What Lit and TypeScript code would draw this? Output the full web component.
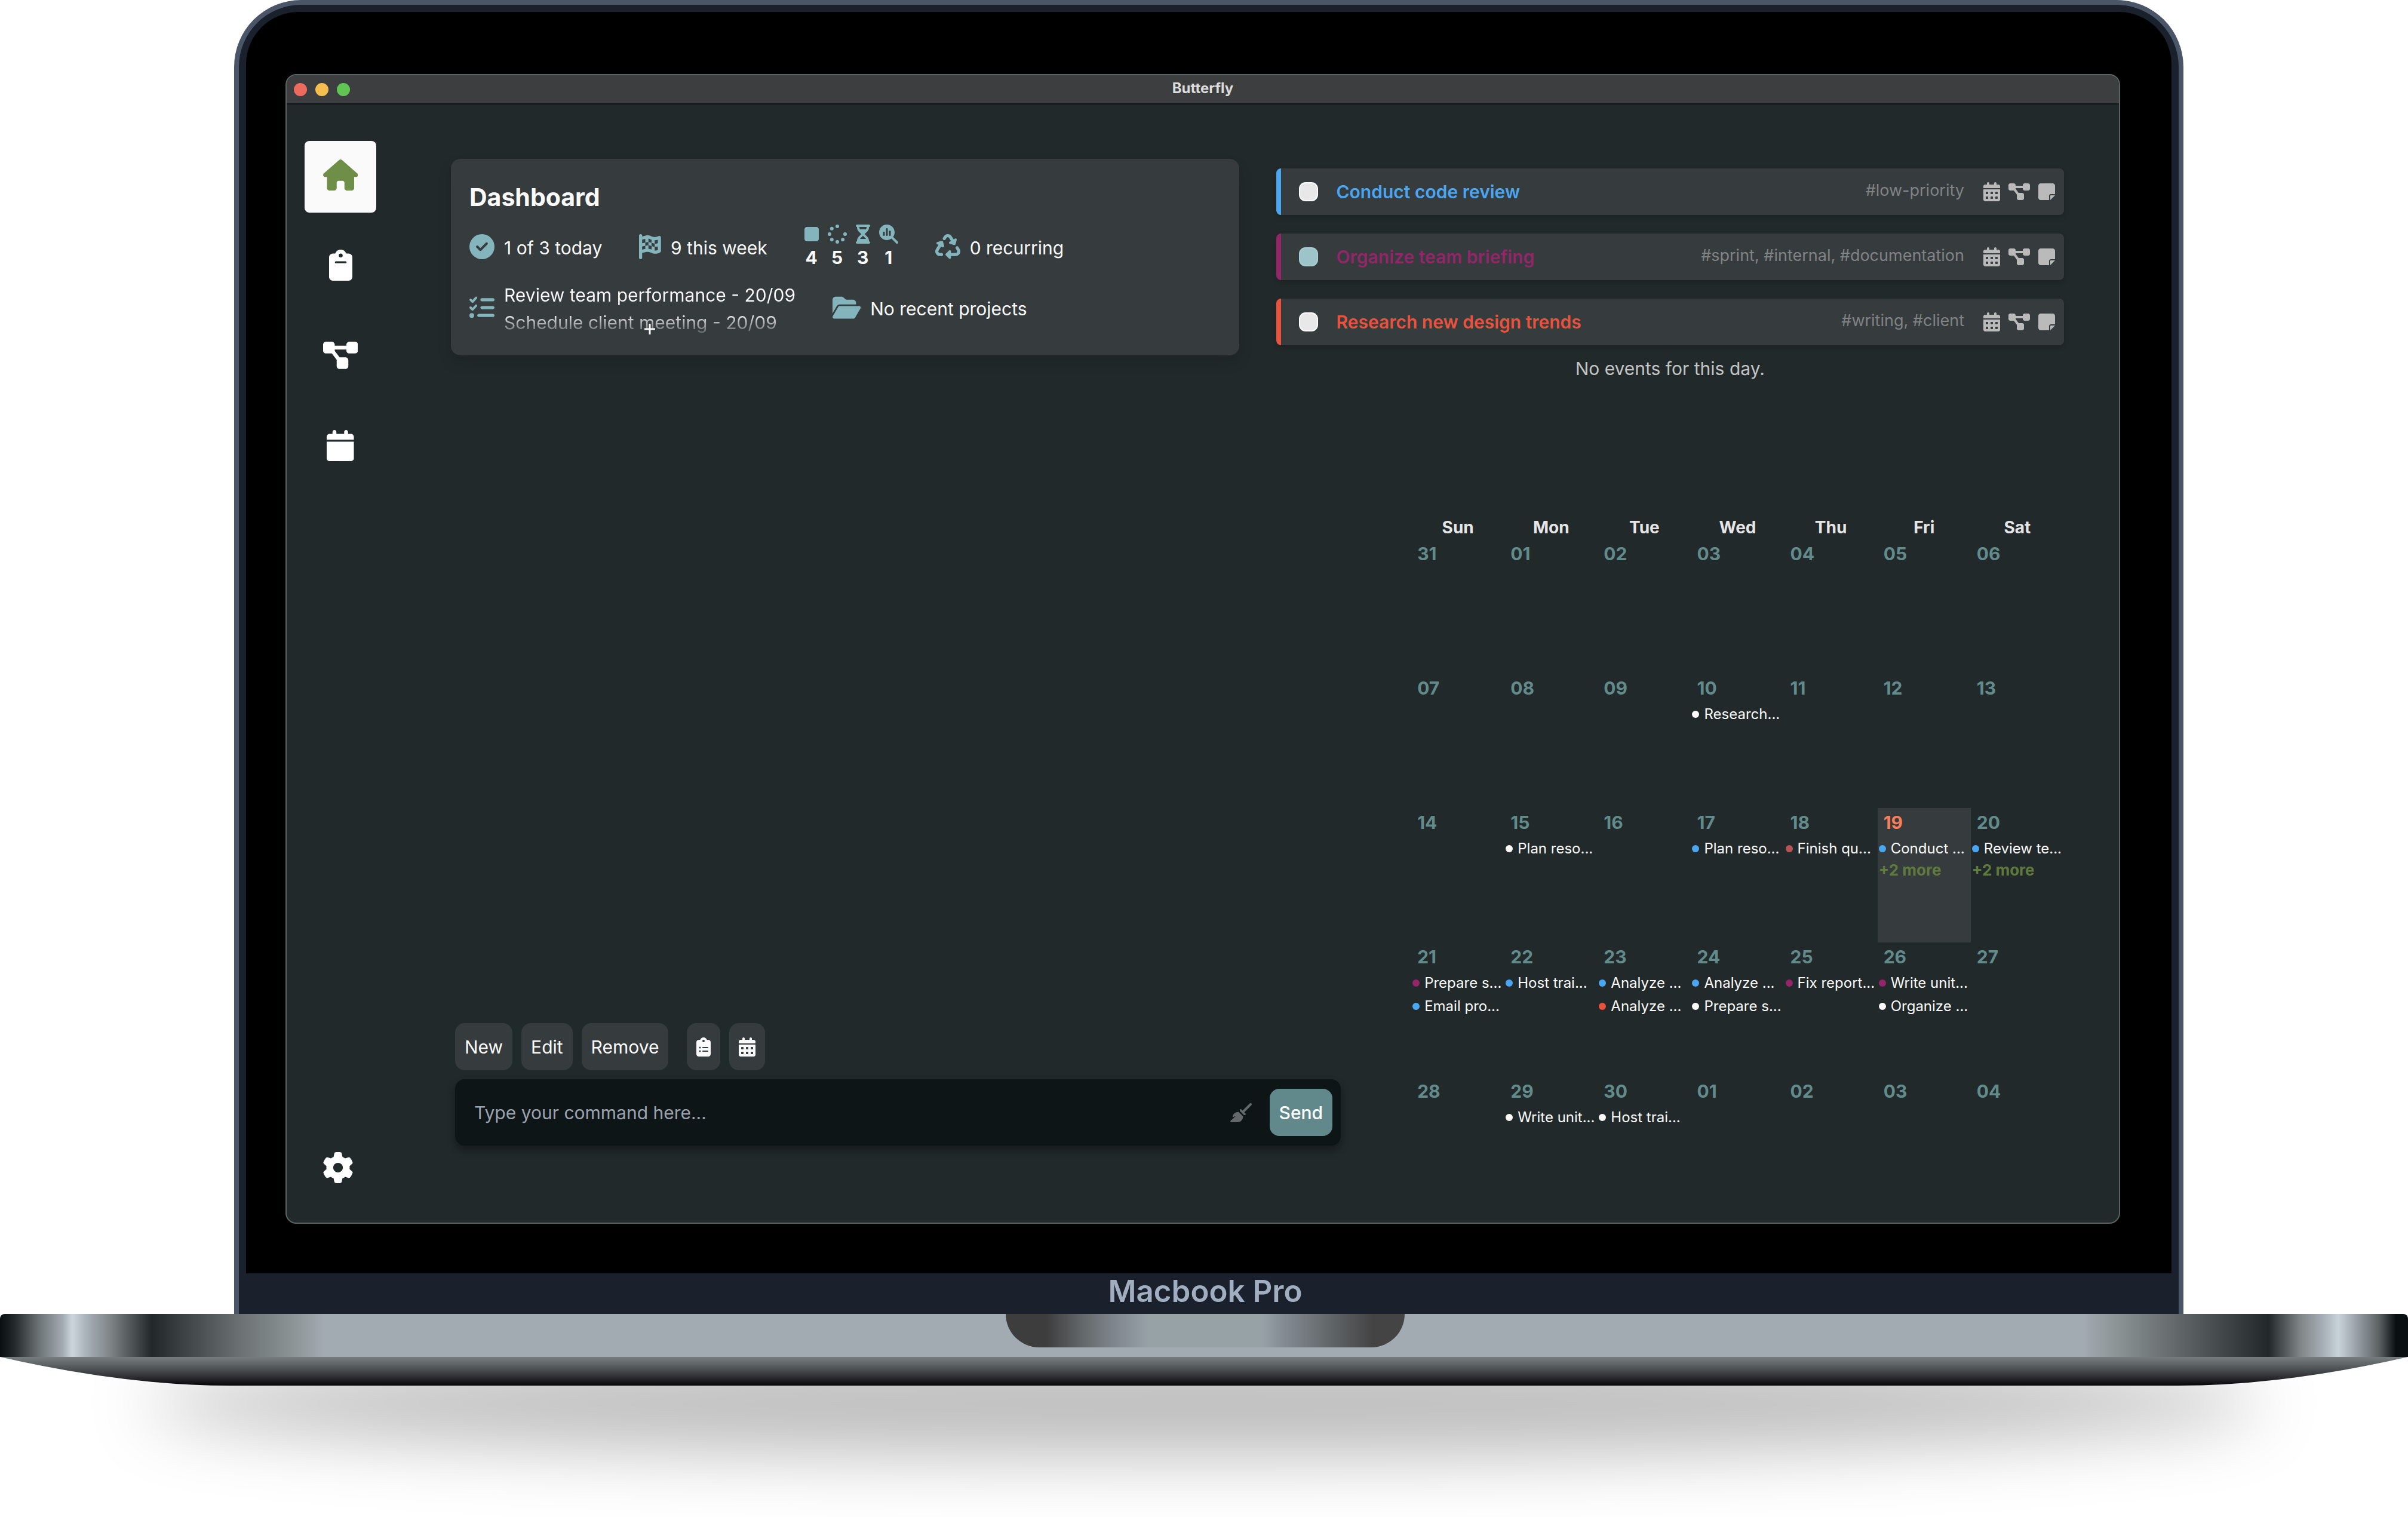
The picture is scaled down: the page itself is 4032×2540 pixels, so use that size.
import { LitElement, html, css, svg } from "lit";
import { customElement, property } from "lit/decorators.js";
import { classMap } from "lit/directives/class-map.js";

type Glyph = { w: number; d: string };

const CLIPBOARD_BODY =
  "M192 0c-41.8 0-77.4 26.7-90.5 64H64C28.7 64 0 92.7 0 128V448c0 35.3 28.7 64 64 64H320c35.3 0 64-28.7 64-64V128c0-35.3-28.7-64-64-64H282.5C269.4 26.7 233.8 0 192 0zm0 64a32 32 0 1 1 0 64 32 32 0 1 1 0-64z";

const ICONS: Record<string, Glyph> = {
  house: {
    w: 576,
    d: "M575.8 255.5c0 18-15 32.1-32 32.1h-32l.7 160.2c0 2.7-.2 5.4-.5 8.1V472c0 22.1-17.9 40-40 40H456c-1.1 0-2.2 0-3.3-.1c-1.4 .1-2.8 .1-4.2 .1H416 392c-22.1 0-40-17.9-40-40V448 384c0-17.7-14.3-32-32-32H256c-17.7 0-32 14.3-32 32v64 24c0 22.1-17.9 40-40 40H160 128.1c-1.5 0-3-.1-4.5-.2c-1.2 .1-2.4 .2-3.6 .2H104c-22.1 0-40-17.9-40-40V360c0-.9 0-1.9 .1-2.8V287.6H32c-18 0-32-14-32-32.1c0-9 3-17 10-24L266.4 8c7-7 15-8 22-8s15 2 21 7L564.8 231.5c8 7 12 15 11 24z",
  },
  clipboard: {
    w: 384,
    d: CLIPBOARD_BODY + "M112 192H272c8.8 0 16 7.2 16 16s-7.2 16-16 16H112c-8.8 0-16-7.2-16-16s7.2-16 16-16z",
  },
  clipboardList: {
    w: 384,
    d:
      CLIPBOARD_BODY +
      "M72 272a24 24 0 1 1 48 0 24 24 0 1 1 -48 0zm104-16H304c8.8 0 16 7.2 16 16s-7.2 16-16 16H176c-8.8 0-16-7.2-16-16s7.2-16 16-16zM72 368a24 24 0 1 1 48 0 24 24 0 1 1 -48 0zm88 0c0-8.8 7.2-16 16-16H304c8.8 0 16 7.2 16 16s-7.2 16-16 16H176c-8.8 0-16-7.2-16-16z",
  },
  diagram: {
    w: 576,
    d: "M0 80C0 53.5 21.5 32 48 32h96c26.5 0 48 21.5 48 48V96H384V80c0-26.5 21.5-48 48-48h96c26.5 0 48 21.5 48 48v96c0 26.5-21.5 48-48 48H432c-26.5 0-48-21.5-48-48V160H192v16c0 1.7-.1 3.4-.3 5L272 288h96c26.5 0 48 21.5 48 48v96c0 26.5-21.5 48-48 48H272c-26.5 0-48-21.5-48-48V336c0-1.7 .1-3.4 .3-5L144 224H48c-26.5 0-48-21.5-48-48V80z",
  },
  calendar: {
    w: 448,
    d: "M96 32V64H48C21.5 64 0 85.5 0 112v48H448V112c0-26.5-21.5-48-48-48H352V32c0-17.7-14.3-32-32-32s-32 14.3-32 32V64H160V32c0-17.7-14.3-32-32-32S96 14.3 96 32zM448 192H0V464c0 26.5 21.5 48 48 48H400c26.5 0 48-21.5 48-48V192z",
  },
  calendarDays: {
    w: 448,
    d: "M128 0c17.7 0 32 14.3 32 32V64H288V32c0-17.7 14.3-32 32-32s32 14.3 32 32V64h48c26.5 0 48 21.5 48 48v48H0V112C0 85.5 21.5 64 48 64H96V32c0-17.7 14.3-32 32-32zM0 192H448V464c0 26.5-21.5 48-48 48H48c-26.5 0-48-21.5-48-48V192zm64 80v32c0 8.8 7.2 16 16 16h32c8.8 0 16-7.2 16-16V272c0-8.8-7.2-16-16-16H80c-8.8 0-16 7.2-16 16zm128 0v32c0 8.8 7.2 16 16 16h32c8.8 0 16-7.2 16-16V272c0-8.8-7.2-16-16-16H208c-8.8 0-16 7.2-16 16zm144-16c-8.8 0-16 7.2-16 16v32c0 8.8 7.2 16 16 16h32c8.8 0 16-7.2 16-16V272c0-8.8-7.2-16-16-16H336zM64 400v32c0 8.8 7.2 16 16 16h32c8.8 0 16-7.2 16-16V400c0-8.8-7.2-16-16-16H80c-8.8 0-16 7.2-16 16zm144-16c-8.8 0-16 7.2-16 16v32c0 8.8 7.2 16 16 16h32c8.8 0 16-7.2 16-16V400c0-8.8-7.2-16-16-16H208zm112 16v32c0 8.8 7.2 16 16 16h32c8.8 0 16-7.2 16-16V400c0-8.8-7.2-16-16-16H336c-8.8 0-16 7.2-16 16z",
  },
  gear: {
    w: 512,
    d: "M495.9 166.6c3.2 8.7 .5 18.4-6.4 24.6l-43.3 39.4c1.1 8.3 1.7 16.8 1.7 25.4s-.6 17.1-1.7 25.4l43.3 39.4c6.9 6.2 9.6 15.9 6.4 24.6c-4.4 11.9-9.7 23.3-15.8 34.3l-4.7 8.1c-6.6 11-14 21.4-22.1 31.2c-5.9 7.2-15.7 9.6-24.5 6.8l-55.7-17.7c-13.4 10.3-28.2 18.9-44 25.4l-12.5 57.1c-2 9.1-9 16.3-18.2 17.8c-13.8 2.3-28 3.5-42.5 3.5s-28.7-1.2-42.5-3.5c-9.2-1.5-16.2-8.7-18.2-17.8l-12.5-57.1c-15.8-6.5-30.6-15.1-44-25.4L83.1 425.9c-8.8 2.8-18.6 .3-24.5-6.8c-8.1-9.8-15.5-20.2-22.1-31.2l-4.7-8.1c-6.1-11-11.4-22.4-15.8-34.3c-3.2-8.7-.5-18.4 6.4-24.6l43.3-39.4C64.6 273.1 64 264.6 64 256s.6-17.1 1.7-25.4L22.4 191.2c-6.9-6.2-9.6-15.9-6.4-24.6c4.4-11.9 9.7-23.3 15.8-34.3l4.7-8.1c6.6-11 14-21.4 22.1-31.2c5.9-7.2 15.7-9.6 24.5-6.8l55.7 17.7c13.4-10.3 28.2-18.9 44-25.4l12.5-57.1c2-9.1 9-16.3 18.2-17.8C227.3 1.2 241.5 0 256 0s28.7 1.2 42.5 3.5c9.2 1.5 16.2 8.7 18.2 17.8l12.5 57.1c15.8 6.5 30.6 15.1 44 25.4l55.7-17.7c8.8-2.8 18.6-.3 24.5 6.8c8.1 9.8 15.5 20.2 22.1 31.2l4.7 8.1c6.1 11 11.4 22.4 15.8 34.3zM256 336a80 80 0 1 0 0-160 80 80 0 1 0 0 160z",
  },
  circleCheck: {
    w: 512,
    d: "M256 512A256 256 0 1 0 256 0a256 256 0 1 0 0 512zM369 209L241 337c-9.4 9.4-24.6 9.4-33.9 0l-64-64c-9.4-9.4-9.4-24.6 0-33.9s24.6-9.4 33.9 0l47 47L335 175c9.4-9.4 24.6-9.4 33.9 0s9.4 24.6 0 33.9z",
  },
  flag: {
    w: 448,
    d: "M32 0C49.7 0 64 14.3 64 32V48l69-17.2c38.1-9.5 78.3-5.1 113.5 12.5c46.3 23.2 100.8 23.2 147.1 0l9.6-4.8C423.8 28.1 448 43.1 448 66.1V345.8c0 13.3-8.3 25.3-20.8 30l-34.7 13c-46.2 17.3-97.6 14.6-141.7-7.4c-37.9-19-81.3-23.7-122.5-13.4L64 384v96c0 17.7-14.3 32-32 32s-32-14.3-32-32V400 334 64 32C0 14.3 14.3 0 32 0zM64 187.1l64-13.9v65.5L64 252.6V318l48.8-12.2c5.1-1.3 10.1-2.4 15.2-3.3V238.7l38.9-8.4c8.3-1.8 16.7-2.5 25.1-2.1l0-64c13.6 .4 27.2 2.6 40.4 6.4l23.6 6.9v66.7l-41.7-12.3c-7.3-2.1-14.8-3.4-22.3-3.8v71.4c21.8 1.9 43.3 6.7 64 14.4V244.2l22.7 6.7c13.5 4 27.3 6.4 41.3 7.4V194c-7.8-.8-15.6-2.3-23.2-4.5l-40.8-12v-62c-13-3.8-25.8-8.8-38.2-15c-8.2-4.1-16.9-7-25.8-8.8v72.4c-13-.4-26 .8-38.7 3.6L128 173.2V98L64 114v73.1zM320 335.7c16.8 1.5 33.9-.7 50-6.8l14-5.2V251.9l-7.9 1.8c-18.4 4.3-37.3 5.7-56.1 4.5v77.4zm64-149.4V115.4c-20.9 6.1-42.4 9.1-64 9.1V194c13.9 1.4 28 .5 41.7-2.6l22.3-5.2z",
  },
  stop: {
    w: 384,
    d: "M0 128C0 92.7 28.7 64 64 64H320c35.3 0 64 28.7 64 64V384c0 35.3-28.7 64-64 64H64c-35.3 0-64-28.7-64-64V128z",
  },
  spinner: {
    w: 512,
    d: "M304 48a48 48 0 1 0 -96 0 48 48 0 1 0 96 0zM304 464a48 48 0 1 0 -96 0 48 48 0 1 0 96 0zM96 256a48 48 0 1 0 -96 0 48 48 0 1 0 96 0zM512 256a48 48 0 1 0 -96 0 48 48 0 1 0 96 0zM157 109a48 48 0 1 0 -96 0 48 48 0 1 0 96 0zM157 403a48 48 0 1 0 -96 0 48 48 0 1 0 96 0zM451 403a48 48 0 1 0 -96 0 48 48 0 1 0 96 0z",
  },
  hourglass: {
    w: 384,
    d: "M32 0C14.3 0 0 14.3 0 32S14.3 64 32 64V75c0 42.4 16.9 83.1 46.9 113.1L146.7 256 78.9 323.9C48.9 353.9 32 394.6 32 437v11c-17.7 0-32 14.3-32 32s14.3 32 32 32H64 320h32c17.7 0 32-14.3 32-32s-14.3-32-32-32V437c0-42.4-16.9-83.1-46.9-113.1L237.3 256l67.9-67.9c30-30 46.9-70.7 46.9-113.1V64c17.7 0 32-14.3 32-32s-14.3-32-32-32H320 64 32zM96 75V64H288V75c0 19-5.6 37.4-16 53H112c-10.3-15.6-16-34-16-53zm16 309c3.5-5.3 7.6-10.3 12.1-14.9L192 301.3l67.9 67.9c4.6 4.6 8.6 9.6 12.1 14.9H112z",
  },
  chart: {
    w: 512,
    d: "M416 208c0 45.9-14.9 88.3-40 122.7L502.6 457.4c12.5 12.5 12.5 32.8 0 45.3s-32.8 12.5-45.3 0L330.7 376c-34.4 25.2-76.8 40-122.7 40C93.1 416 0 322.9 0 208S93.1 0 208 0S416 93.1 416 208zm-312 8v64c0 13.3 10.7 24 24 24s24-10.7 24-24V216c0-13.3-10.7-24-24-24s-24 10.7-24 24zm80-96V280c0 13.3 10.7 24 24 24s24-10.7 24-24V120c0-13.3-10.7-24-24-24s-24 10.7-24 24zm80 64v96c0 13.3 10.7 24 24 24s24-10.7 24-24V184c0-13.3-10.7-24-24-24s-24 10.7-24 24z",
  },
  recycle: {
    w: 512,
    d: "M174.7 45.1C192.2 17 223 0 256 0s63.8 17 81.3 45.1l38.6 61.7 27-15.6c8.4-4.9 18.9-4.2 26.6 1.7s11.1 15.9 8.6 25.3l-23.4 87.4c-3.4 12.8-16.6 20.4-29.4 17l-87.4-23.4c-9.4-2.5-16.3-10.4-17.6-20s3.4-19.1 11.8-23.9l28.4-16.4L283 79c-5.8-9.3-16-15-27-15s-21.2 5.7-27 15l-17.5 28c-9.2 14.8-28.6 19.5-43.6 10.5c-15.3-9.2-20.2-29.2-10.7-44.4l17.5-28zM429.5 251.9c15-9 34.4-4.3 43.6 10.5l24.4 39.1c9.4 15.1 14.4 32.4 14.6 50.2c.3 53.1-42.7 96.4-95.8 96.4L320 448v32c0 9.7-5.8 18.5-14.8 22.2s-19.3 1.7-26.2-5.2l-64-64c-9.4-9.4-9.4-24.6 0-33.9l64-64c6.9-6.9 17.2-8.9 26.2-5.2s14.8 12.5 14.8 22.2v32l96.2 0c17.6 0 31.9-14.4 31.8-32c0-5.9-1.7-11.7-4.8-16.7l-24.4-39.1c-9.5-15.2-4.7-35.2 10.7-44.4zm-364.6-31L36 204.2c-8.4-4.9-13.1-14.3-11.8-23.9s8.2-17.5 17.6-20l87.4-23.4c12.8-3.4 26 4.2 29.4 17L182 241.2c2.5 9.4-.9 19.3-8.6 25.3s-18.2 6.6-26.6 1.7l-26.5-15.3L68.8 335.3c-3.1 5-4.8 10.8-4.8 16.7c-.1 17.6 14.2 32 31.8 32l32.2 0c17.7 0 32 14.3 32 32s-14.3 32-32 32l-32.2 0C42.7 448-.3 404.8 0 351.6c.1-17.8 5.1-35.1 14.6-50.2l50.3-80.5z",
  },
  listCheck: {
    w: 512,
    d: "M152.1 38.2c9.9 8.9 10.7 24 1.8 33.9l-72 80c-4.4 4.9-10.6 7.8-17.2 7.9s-12.9-2.4-17.6-7L7 113C-2.3 103.6-2.3 88.4 7 79s24.6-9.4 33.9 0l22.1 22.1 55.1-61.2c8.9-9.9 24-10.7 33.9-1.8zm0 160c9.9 8.9 10.7 24 1.8 33.9l-72 80c-4.4 4.9-10.6 7.8-17.2 7.9s-12.9-2.4-17.6-7L7 273c-9.4-9.4-9.4-24.6 0-33.9s24.6-9.4 33.9 0l22.1 22.1 55.1-61.2c8.9-9.9 24-10.7 33.9-1.8zM224 96c0-17.7 14.3-32 32-32H480c17.7 0 32 14.3 32 32s-14.3 32-32 32H256c-17.7 0-32-14.3-32-32zm0 160c0-17.7 14.3-32 32-32H480c17.7 0 32 14.3 32 32s-14.3 32-32 32H256c-17.7 0-32-14.3-32-32zM160 416c0-17.7 14.3-32 32-32H480c17.7 0 32 14.3 32 32s-14.3 32-32 32H192c-17.7 0-32-14.3-32-32zM48 368a48 48 0 1 1 0 96 48 48 0 1 1 0-96z",
  },
  folder: {
    w: 576,
    d: "M88.7 223.8L0 375.8V96C0 60.7 28.7 32 64 32H181.5c17 0 33.3 6.7 45.3 18.7l26.5 26.5c12 12 28.3 18.7 45.3 18.7H416c35.3 0 64 28.7 64 64v32H144c-22.8 0-43.8 12.1-55.3 31.8zm27.6 16.1C122.1 230 132.6 224 144 224H544c11.5 0 22 6.1 27.7 16.1s5.7 22.2-.1 32.1l-112 192C453.9 474 443.4 480 432 480H32c-11.5 0-22-6.1-27.7-16.1s-5.7-22.2 .1-32.1l112-192z",
  },
  note: {
    w: 448,
    d: "M64 32C28.7 32 0 60.7 0 96V416c0 35.3 28.7 64 64 64H288V368c0-26.5 21.5-48 48-48H448V96c0-35.3-28.7-64-64-64H64zM448 352H402.7 336c-8.8 0-16 7.2-16 16v66.7V480l32-32 64-64 32-32z",
  },
  broom: {
    w: 576,
    d: "M566.6 54.6c12.5-12.5 12.5-32.8 0-45.3s-32.8-12.5-45.3 0l-192 192-34.7-34.7c-4.2-4.2-10-6.6-16-6.6c-12.5 0-22.6 10.1-22.6 22.6v29.1L364.3 320h29.1c12.5 0 22.6-10.1 22.6-22.6c0-6-2.4-11.8-6.6-16l-34.7-34.7 192-192zM341.1 353.4L222.6 234.9c-42.7-3.7-85.2 11.7-115.8 42.3l-8 8C76.5 307.5 64 337.7 64 369.2c0 6.8 7.1 11.2 13.2 8.2l51.1-25.5c5-2.5 9.5 4.1 5.4 7.9L7.3 473.4C2.7 477.6 0 483.6 0 489.9C0 502.1 9.9 512 22.1 512l173.3 0c38.8 0 75.9-15.4 103.4-42.8c30.6-30.6 45.9-73.1 42.3-115.8z",
  },
};

const icon = (name: string) => {
  const g = ICONS[name];
  return html`<svg class="icon" viewBox="0 0 ${g.w} 512" aria-hidden="true">
    ${svg`<path fill="currentColor" fill-rule="evenodd" d=${g.d}></path>`}
  </svg>`;
};

const iconBase = css`
  .icon {
    display: block;
    height: 1em;
    width: auto;
    flex: none;
  }
`;

@customElement("side-nav")
class SideNav extends LitElement {
  static styles = [
    iconBase,
    css`
      :host {
        display: flex;
        flex-direction: column;
        justify-content: space-between;
        padding: 61px 0 32px 30px;
        font-size: 52px;
      }
      .links {
        display: flex;
        flex-direction: column;
        gap: 31px;
      }
      .link,
      .settings {
        display: grid;
        place-items: center;
        box-sizing: border-box;
        width: 120px;
        height: 120px;
        padding: 0 0 7px;
        border: 0;
        border-radius: 8px;
        background: none;
        color: #fff;
        font-size: inherit;
      }
      .settings {
        width: 112px;
        padding: 0;
      }
      .active {
        background: #fafafa;
        color: #6f8f49;
      }
    `,
  ];

  render() {
    return html`
      <nav class="links" aria-label="Main">
        <a class="link active" href="#home" aria-label="Home" aria-current="page">${icon("house")}</a>
        <a class="link" href="#tasks" aria-label="Tasks">${icon("clipboard")}</a>
        <a class="link" href="#projects" aria-label="Projects">${icon("diagram")}</a>
        <a class="link" href="#calendar" aria-label="Calendar">${icon("calendar")}</a>
      </nav>
      <button class="settings" type="button" aria-label="Settings">${icon("gear")}</button>
    `;
  }
}

@customElement("dashboard-card")
class DashboardCard extends LitElement {
  static styles = [
    iconBase,
    css`
      :host {
        display: block;
        box-sizing: border-box;
        padding: 32px 31px;
        border-radius: 16px;
        background: #363c3e;
        box-shadow: 0 12px 24px rgba(0, 0, 0, 0.12);
        color: #fafafa;
        font-size: 30px;
        line-height: 46px;
      }
      .heading {
        margin: 0 0 11px;
        font-size: 41px;
        line-height: 64px;
        font-weight: 700;
      }
      .row {
        display: flex;
        align-items: center;
        gap: 62px;
        height: 84px;
      }
      .row + .row {
        margin-top: 14px;
        height: 92px;
      }
      .fact {
        display: flex;
        align-items: center;
        gap: 16px;
      }
      .fact > .icon {
        height: 42px;
        color: #84b5bd;
        margin-bottom: 4px;
      }
      .counts {
        display: flex;
        gap: 15px;
        margin: 0;
      }
      .count {
        display: flex;
        flex-direction: column;
        align-items: center;
      }
      .count dt {
        color: #84b5bd;
        font-size: 32px;
      }
      .count dd {
        margin: 0;
        font-weight: 700;
      }
      .upcoming {
        position: relative;
        margin: 0;
        padding: 0;
        list-style: none;
        -webkit-background-clip: text;
        background-clip: text;
        background-image: linear-gradient(#fafafa 50%, #f0f0f0 60%, #6c7071 92%);
        color: transparent;
      }
      .more {
        position: absolute;
        left: 50%;
        bottom: 3px;
        width: 18px;
        height: 18px;
        transform: translateX(-50%);
      }
    `,
  ];

  private counts = [
    ["stop", "To do", 4],
    ["spinner", "In progress", 5],
    ["hourglass", "Waiting", 3],
    ["chart", "In review", 1],
  ] as const;

  render() {
    return html`
      <h1 class="heading">Dashboard</h1>
      <div class="row">
        <div class="fact">${icon("circleCheck")}<span>1 of 3 today</span></div>
        <div class="fact">${icon("flag")}<span>9 this week</span></div>
        <dl class="counts">
          ${this.counts.map(
            ([name, label, n]) => html`<div class="count">
              <dt aria-label=${label}>${icon(name)}</dt>
              <dd>${n}</dd>
            </div>`
          )}
        </dl>
        <div class="fact">${icon("recycle")}<span>0 recurring</span></div>
      </div>
      <div class="row">
        <div class="fact">
          ${icon("listCheck")}
          <ul class="upcoming">
            <li>Review team performance - 20/09</li>
            <li>Schedule client meeting - 20/09</li>
            <svg class="more" viewBox="0 0 18 18" aria-hidden="true">
              <path d="M9 0V18M0 9H18" stroke="#fafafa" stroke-width="3" />
            </svg>
          </ul>
        </div>
        <div class="fact">${icon("folder")}<span>No recent projects</span></div>
      </div>
    `;
  }
}

@customElement("task-list")
class TaskList extends LitElement {
  static styles = [
    iconBase,
    css`
      :host {
        display: block;
        padding-top: 16px;
        font-size: 30px;
        line-height: 46px;
      }
      .tasks {
        display: flex;
        flex-direction: column;
        gap: 31px;
        margin: 0;
        padding: 0;
        list-style: none;
      }
      .task {
        display: flex;
        align-items: center;
        box-sizing: border-box;
        height: 78px;
        padding: 0 15px 0 30px;
        border-left: 8px solid currentColor;
        border-radius: 8px;
        background: #363c3e;
        box-shadow: 0 4px 8px rgba(0, 0, 0, 0.15);
      }
      .blue {
        color: #4ba6f2;
      }
      .plum {
        color: #932569;
      }
      .red {
        color: #e9523d;
      }
      .check {
        appearance: none;
        flex: none;
        width: 32px;
        height: 32px;
        margin: 0 31px 0 0;
        border: 2px solid #fafafa;
        border-radius: 11px;
        background: #e8e8e8;
      }
      .check:checked {
        border-color: #a7ced2;
        background: #9dc5c9;
      }
      .name {
        flex: 1;
        font-weight: 600;
      }
      .tags {
        margin-right: 32px;
        padding-bottom: 4px;
        color: #808283;
        font-size: 27px;
      }
      .actions {
        display: flex;
        gap: 14px;
      }
      .action {
        padding: 0;
        border: 0;
        background: none;
        color: #bababa;
        font-size: 32px;
      }
      .empty {
        margin: 16px 0 0;
        color: #c3c4c4;
        text-align: center;
      }
    `,
  ];

  private tasks = [
    { name: "Conduct code review", tags: "#low-priority", tone: "blue", done: false },
    { name: "Organize team briefing", tags: "#sprint, #internal, #documentation", tone: "plum", done: true },
    { name: "Research new design trends", tags: "#writing, #client", tone: "red", done: false },
  ];

  render() {
    return html`
      <ul class="tasks">
        ${this.tasks.map(
          (t, i) => html`<li class="task ${t.tone}">
            <input class="check" type="checkbox" id="task-${i}" .checked=${t.done} />
            <label class="name" for="task-${i}">${t.name}</label>
            <span class="tags">${t.tags}</span>
            <span class="actions">
              <button class="action" type="button" aria-label="Schedule">${icon("calendarDays")}</button>
              <button class="action" type="button" aria-label="Project">${icon("diagram")}</button>
              <button class="action" type="button" aria-label="Note">${icon("note")}</button>
            </span>
          </li>`
        )}
      </ul>
      <p class="empty">No events for this day.</p>
    `;
  }
}

@customElement("command-bar")
class CommandBar extends LitElement {
  static styles = [
    iconBase,
    css`
      :host {
        display: flex;
        flex-direction: column;
        justify-content: flex-end;
        padding-bottom: 110px;
        font-size: 30px;
      }
      .tools {
        display: flex;
        gap: 15px;
        margin-bottom: 15px;
      }
      .tool,
      .send {
        display: flex;
        align-items: center;
        height: 79px;
        padding: 0 16px;
        border: 0;
        border-radius: 16px;
        background: #363c3e;
        color: #fafafa;
        font: inherit;
      }
      .tool .icon,
      .clear .icon {
        height: 32px;
      }
      .spaced {
        margin-left: 16px;
      }
      .bar {
        display: flex;
        align-items: center;
        height: 111px;
        box-sizing: border-box;
        padding: 0 14px 0 32px;
        border-radius: 16px;
        background: #0d1517;
        box-shadow: 0 8px 14px rgba(0, 0, 0, 0.35);
      }
      .field {
        flex: 1;
        min-width: 0;
        height: 79px;
        padding: 0;
        border: 0;
        outline: 0;
        background: none;
        color: #fafafa;
        font: inherit;
      }
      .field::placeholder {
        color: #9ca3af;
        opacity: 1;
      }
      .clear {
        padding: 0;
        border: 0;
        margin-right: 30px;
        background: none;
        color: #636869;
      }
      .send {
        background: #61898b;
        color: #fff;
        font-weight: 500;
      }
    `,
  ];

  render() {
    return html`
      <div class="tools">
        <button class="tool" type="button">New</button>
        <button class="tool" type="button">Edit</button>
        <button class="tool" type="button">Remove</button>
        <button class="tool spaced" type="button" aria-label="Task">${icon("clipboardList")}</button>
        <button class="tool" type="button" aria-label="Event">${icon("calendarDays")}</button>
      </div>
      <form class="bar">
        <input class="field" type="text" aria-label="Command" placeholder="Type your command here..." />
        <button class="clear" type="button" aria-label="Clear">${icon("broom")}</button>
        <button class="send" type="button">Send</button>
      </form>
    `;
  }
}

type CalEvent = [tone: string, text: string];

@customElement("month-grid")
class MonthGrid extends LitElement {
  static styles = css`
    :host {
      display: block;
    }
    .month {
      width: 100%;
      table-layout: fixed;
      border-collapse: collapse;
    }
    .weekday {
      height: 32px;
      padding: 0 0 4px;
      color: #e6e6e6;
      font-size: 28px;
      line-height: 32px;
      font-weight: 700;
    }
    .day {
      height: 225px;
      padding: 0;
      vertical-align: top;
      white-space: nowrap;
    }
    .today {
      background: #363c3e;
    }
    .date {
      display: block;
      padding: 4px 0 4px 10px;
      color: #628b8c;
      font-size: 30px;
      line-height: 40px;
      font-weight: 700;
    }
    .today .date {
      color: #f77f5c;
    }
    .event {
      display: flex;
      align-items: center;
      gap: 8px;
      padding-left: 2px;
      height: 39px;
      line-height: 39px;
      color: #fafafa;
      font-size: 24px;
    }
    .event::before {
      content: "";
      flex: none;
      width: 12px;
      height: 12px;
      border-radius: 50%;
      background: var(--tone, #fafafa);
    }
    .blue {
      --tone: #4ba6f2;
    }
    .plum {
      --tone: #932569;
    }
    .red {
      --tone: #e9523d;
    }
    .brick {
      --tone: #b55554;
    }
    .extra {
      display: block;
      padding: 0 0 0 2px;
      border: 0;
      background: none;
      color: #607a3d;
      font: inherit;
      font-size: 26px;
      line-height: 34px;
      font-weight: 700;
    }
  `;

  private weekdays = ["Sun", "Mon", "Tue", "Wed", "Thu", "Fri", "Sat"];

  private weeks = [
    ["31", "01", "02", "03", "04", "05", "06"],
    ["07", "08", "09", "10", "11", "12", "13"],
    ["14", "15", "16", "17", "18", "19", "20"],
    ["21", "22", "23", "24", "25", "26", "27"],
    ["28", "29", "30", "01", "02", "03", "04"],
  ];

  /** Events keyed by week and weekday index. */
  private events: Record<string, CalEvent[]> = {
    "1-3": [["white", "Research..."]],
    "2-1": [["white", "Plan reso..."]],
    "2-3": [["blue", "Plan reso..."]],
    "2-4": [["brick", "Finish qu..."]],
    "2-5": [["blue", "Conduct ..."]],
    "2-6": [["blue", "Review te..."]],
    "3-0": [["plum", "Prepare s..."], ["blue", "Email pro..."]],
    "3-1": [["blue", "Host trai..."]],
    "3-2": [["blue", "Analyze ..."], ["red", "Analyze ..."]],
    "3-3": [["blue", "Analyze ..."], ["white", "Prepare s..."]],
    "3-4": [["plum", "Fix report..."]],
    "3-5": [["plum", "Write unit..."], ["white", "Organize ..."]],
    "4-1": [["white", "Write unit..."]],
    "4-2": [["white", "Host trai..."]],
  };

  private extras: Record<string, number> = { "2-5": 2, "2-6": 2 };

  render() {
    return html`<table class="month">
      <thead>
        <tr>
          ${this.weekdays.map((d) => html`<th class="weekday" scope="col">${d}</th>`)}
        </tr>
      </thead>
      <tbody>
        ${this.weeks.map(
          (week, w) => html`<tr>
            ${week.map((day, d) => {
              const key = `${w}-${d}`;
              return html`<td class=${classMap({ day: true, today: key === "2-5" })}>
                <span class="date">${day}</span>
                ${(this.events[key] ?? []).map(([tone, text]) => html`<div class="event ${tone}">${text}</div>`)}
                ${this.extras[key] ? html`<button class="extra" type="button">+${this.extras[key]} more</button>` : null}
              </td>`;
            })}
          </tr>`
        )}
      </tbody>
    </table>`;
  }
}

@customElement("app-window")
class AppWindow extends LitElement {
  @property() heading = "";

  static styles = css`
    :host {
      display: block;
      overflow: hidden;
      border: 2px solid #5b6465;
      border-radius: 18px;
      background: #22292b;
    }
    .titlebar {
      display: grid;
      grid-template-columns: 1fr auto 1fr;
      align-items: center;
      height: 47px;
      padding: 0 12px;
      border-bottom: 2px solid #111516;
      background: #3c3e3f;
    }
    .lights {
      display: flex;
      gap: 14px;
    }
    .light {
      width: 22px;
      height: 22px;
      padding: 0;
      border: 0;
      border-radius: 50%;
    }
    .close {
      background: #ed6a5e;
    }
    .minimise {
      background: #f5bf4f;
    }
    .zoom {
      background: #61c554;
    }
    .title {
      padding-bottom: 3px;
      color: #dcdcdc;
      font-size: 24px;
      line-height: 32px;
      font-weight: 700;
    }
    .body {
      display: flex;
    }
    .main {
      flex: 1;
      min-width: 0;
      padding: 91px 92px 19px 125px;
    }
    .top {
      display: grid;
      grid-template-columns: 1fr 1fr;
      gap: 62px;
      align-items: start;
    }
    .bottom {
      display: grid;
      grid-template-columns: 19fr 14fr;
      gap: 118px;
      margin-top: 227px;
      padding-left: 7px;
    }
  `;

  render() {
    return html`
      <header class="titlebar">
        <div class="lights">
          <button class="light close" type="button" aria-label="Close"></button>
          <button class="light minimise" type="button" aria-label="Minimise"></button>
          <button class="light zoom" type="button" aria-label="Zoom"></button>
        </div>
        <span class="title">${this.heading}</span>
      </header>
      <div class="body">
        <side-nav></side-nav>
        <main class="main">
          <div class="top">
            <dashboard-card></dashboard-card>
            <task-list></task-list>
          </div>
          <div class="bottom">
            <command-bar></command-bar>
            <month-grid></month-grid>
          </div>
        </main>
      </div>
    `;
  }
}

@customElement("app-root")
class AppRoot extends LitElement {
  static styles = css`
    :host {
      display: block;
      position: relative;
      overflow: hidden;
      padding-bottom: 220px;
      background: #fff;
      font-family: Inter, "Liberation Sans", sans-serif;
    }
    .shadow {
      position: absolute;
      left: 6%;
      right: 6%;
      bottom: 100px;
      height: 180px;
      border-radius: 50%;
      background: rgba(0, 0, 0, 0.26);
      filter: blur(56px);
    }
    .lid {
      position: relative;
      margin: 0 376px 0 392px;
      padding: 12px 12px 0;
      border: 8px solid #4a5568;
      border-bottom: 0;
      border-radius: 112px 112px 0 0;
      background: #1a202c;
    }
    .panel {
      padding: 104px 86px 83px 66px;
      border-radius: 88px 88px 0 0;
      background: #000;
    }
    .chin {
      height: 68px;
      padding-right: 12px;
      color: #a0aec0;
      font-size: 51px;
      line-height: 60px;
      font-weight: 600;
      text-align: center;
    }
    .deck {
      position: relative;
      height: 72px;
      padding-left: 4px;
      border-radius: 8px 8px 0 0;
      background: linear-gradient(
        90deg,
        #0a0f11 0%,
        #23292b 0.6%,
        #6c7274 1.6%,
        #a3abb2 2.6%,
        #cbd6dc 3%,
        #a3abb3 3.7%,
        #7e8385 4.6%,
        #22282a 6.3%,
        #6c7274 10%,
        #8a9193 12%,
        #a3abb2 13.5%,
        #a3abb2 86.5%,
        #8a9293 88%,
        #696e70 90%,
        #22282a 94.2%,
        #7e8385 95.5%,
        #a8b0b8 96.5%,
        #c8d3d9 97.1%,
        #a3abb3 97.7%,
        #5c6163 98.8%,
        #0a0f12 99.5%
      );
    }
    .notch {
      width: 668px;
      height: 56px;
      margin: 0 auto;
      border-radius: 0 0 58px 58px;
      background: linear-gradient(
        90deg,
        #3d3d3d 0%,
        #3d3d3d 10%,
        #666b6d 20%,
        #828890 28%,
        #97a2a7 36%,
        #97a2a7 64%,
        #838a92 70%,
        #5f6466 82%,
        #444 92%
      );
    }
    .underside {
      display: block;
      position: relative;
      width: 100%;
      height: 48px;
    }
  `;

  render() {
    return html`
      <div class="shadow"></div>
      <div class="lid">
        <div class="panel"><app-window heading="Butterfly"></app-window></div>
        <div class="chin">Macbook Pro</div>
      </div>
      <div class="deck"><div class="notch"></div></div>
      <svg class="underside" viewBox="0 0 4032 48" preserveAspectRatio="none" aria-hidden="true">
        <defs>
          <linearGradient id="metal" x1="0" y1="0" x2="0" y2="1">
            <stop offset="0" stop-color="#777d7f" />
            <stop offset="0.4" stop-color="#505456" />
            <stop offset="0.75" stop-color="#28282c" />
            <stop offset="1" stop-color="#060607" />
          </linearGradient>
        </defs>
        <path fill="url(#metal)" d="M0 0H4032Q3822 48 3646 48H386Q210 48 0 0Z" />
      </svg>
    `;
  }
}
